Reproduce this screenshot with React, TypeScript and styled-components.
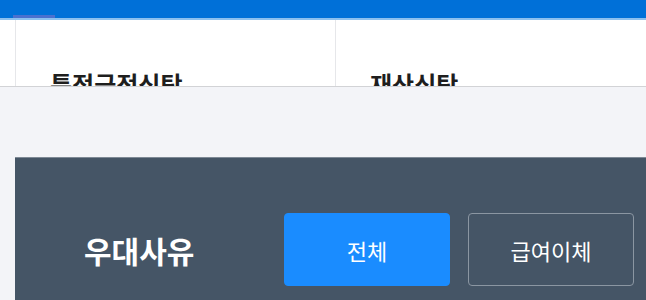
import styled, { createGlobalStyle } from 'styled-components';

const GlobalStyle = createGlobalStyle`
	html, body {
		margin: 0;
		padding: 0;
		background: #f3f4f8;
		font-family: 'Noto Sans CJK KR', 'Noto Sans', sans-serif;
	}
	body {
		overflow: hidden;
	}
`;

interface ButtonProps {
	active?: boolean;
}

const tabs = ['특정금전신탁', '재산신탁'];
const reasons = ['전체', '급여이체'];

function App() {
	return (
		<>
			<GlobalStyle />
			<Page>
				<Header>
					<HeaderIndicator />
				</Header>
				<TabStrip>
					<TabSpacer />
					{tabs.map((tab) => (
						<Tab key={tab}>
							<TabLabel>{tab}</TabLabel>
						</Tab>
					))}
				</TabStrip>
				<Gap />
				<FilterSheet>
					<FilterLabel>우대사유</FilterLabel>
					<ButtonGroup>
						{reasons.map((reason, i) => (
							<FilterButton key={reason} active={i === 0}>
								{reason}
							</FilterButton>
						))}
					</ButtonGroup>
				</FilterSheet>
			</Page>
		</>
	);
}

const Page = styled.div`
	display: flex;
	flex-direction: column;
	height: 300px;
	overflow: hidden;
`;

const Header = styled.header`
	height: 18px;
	background: #0070d8;
	border-bottom: 2px solid #8cc0ef;
	display: flex;
	align-items: flex-end;
	flex-shrink: 0;
`;

const HeaderIndicator = styled.span`
	width: 42px;
	height: 3px;
	margin-left: 13px;
	background: #4a70cf;
`;

const TabStrip = styled.nav`
	display: flex;
	height: 66px;
	background: #ffffff;
	border-bottom: 1px solid #d2d3d6;
	overflow: hidden;
	flex-shrink: 0;
`;

const TabSpacer = styled.div`
	width: 15px;
	border-right: 1px solid #e6e7ea;
`;

const Tab = styled.div`
	width: 285px;
	padding: 52px 0 0 34px;
	border-right: 1px solid #e6e7ea;
	&:last-child {
		border-right: none;
		flex: 1;
	}
`;

const TabLabel = styled.span`
	display: block;
	font-size: 24px;
	line-height: 24px;
	font-weight: 700;
	color: #1e1e1e;
	white-space: nowrap;
`;

const Gap = styled.div`
	height: 70px;
	flex-shrink: 0;
`;

const FilterSheet = styled.section`
	flex: 1;
	margin-left: 15px;
	background: #455566;
	border-top: 1px solid #7e8995;
	display: flex;
	align-items: flex-start;
	padding: 55px 0 0 69px;
`;

const FilterLabel = styled.h3`
	margin: 0;
	width: 200px;
	height: 73px;
	display: flex;
	align-items: center;
	font-size: 30px;
	font-weight: 700;
	color: #ffffff;
	white-space: nowrap;
`;

const ButtonGroup = styled.div`
	display: flex;
	gap: 18px;
`;

const FilterButton = styled.button<ButtonProps>`
	width: 166px;
	height: 73px;
	border-radius: 4px;
	font-family: inherit;
	font-size: 22px;
	font-weight: 400;
	color: #ffffff;
	cursor: pointer;
	background: ${({ active }) => (active ? '#1a8cff' : 'transparent')};
	border: 1px solid ${({ active }) => (active ? '#1a8cff' : '#8b96a2')};
`;

export default App;
